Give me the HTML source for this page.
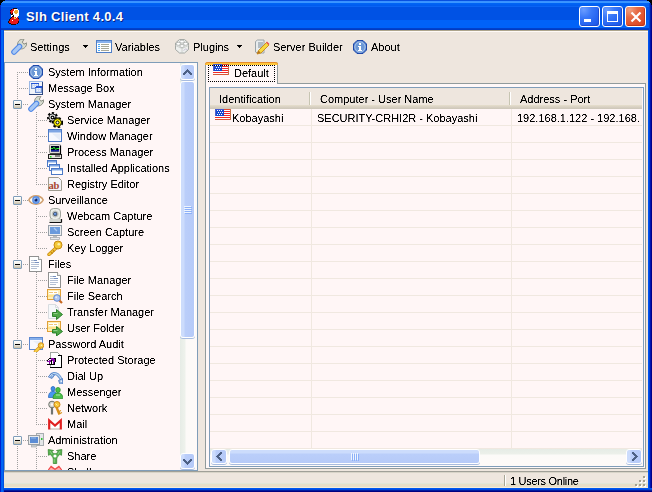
<!DOCTYPE html>
<html><head><meta charset="utf-8">
<style>
*{margin:0;padding:0;box-sizing:border-box}
html,body{width:652px;height:492px;overflow:hidden;background:#0054E3}
body{font-family:"Liberation Sans",sans-serif;font-size:11px;color:#000;position:relative}
.a{position:absolute}
svg{display:block}
#title{left:0;top:0;width:652px;height:30px;
 background:linear-gradient(#0850E0 0px,#0850E0 1px,#3890FF 1px,#3C98FF 3px,#0066F6 3px,#005AEE 6px,#0A64F4 6px,#0A64F4 7px,#0052E4 7px,#0052E4 20px,#0062F8 20px,#0062F8 28px,#0044D0 28px,#0038C0 30px)}
#lb{left:0;top:30px;width:4px;height:462px;background:linear-gradient(90deg,#0020D0 0,#0020D0 1px,#0060F0 1px,#0068F8 3px,#0050E0 3px)}
#rb{left:648px;top:30px;width:4px;height:462px;background:linear-gradient(90deg,#0054F0 0,#0054F0 1px,#0040D8 1px,#0040D8 2px,#0014B0 2px,#0014B0 3px,#000088 3px)}
#bb{left:4px;top:488px;width:648px;height:4px;background:linear-gradient(#0058F0 0,#0058F0 1px,#0048E0 1px,#0048E0 2px,#001CA0 2px,#001CA0 3px,#000080 3px)}
#ttext{left:26px;top:9px;color:#fff;font-weight:bold;font-size:13px;text-shadow:1px 1px #0A1E80;letter-spacing:0.3px}
#frame{left:4px;top:30px;width:644px;height:458px;background:#EEE6DE}
.tbt{position:absolute;top:42px;line-height:1;filter:url(#crisp)}
.tl{position:absolute;white-space:nowrap;line-height:12px;filter:url(#crisp)}
.ic{position:absolute;width:16px;height:16px}
#tree{left:4px;top:62px;width:194px;height:409px;border:1px solid #7F9DB9;background:#FFF6F6;overflow:hidden}
.hd{position:absolute;height:1px;background:repeating-linear-gradient(90deg,#A0A0A0 0 1px,transparent 1px 2px)}
.vd{position:absolute;width:1px;background:repeating-linear-gradient(#A0A0A0 0 1px,transparent 1px 2px)}
.ex{position:absolute;width:9px;height:9px;border:1px solid #7F9DB9;border-radius:1px;background:linear-gradient(#FFFFFF,#F0EEE6 50%,#C7BDA7)}
.ex:after{content:"";position:absolute;left:1px;top:3px;width:5px;height:1px;background:#000}
.sbv{position:absolute;left:180px;top:63px;width:17px;height:406px;background:linear-gradient(90deg,#E6ECE6,#EEF2EC 5px,#FCFAF8 6px,#FEFAF8)}
.sb{position:absolute;border:1px solid #FFFFFF;border-radius:3px;background:linear-gradient(135deg,#C8D8FC,#BCCEFA 50%,#B6CCFC);box-shadow:0 1px #A8BCE0}
.sbtn{position:absolute;border:1px solid #fff;border-radius:2px;background:linear-gradient(135deg,#C8D6FB,#B4C8F6 60%,#AAC0F2)}
.sbtn>div{position:absolute;left:0;top:0;right:0;bottom:0;border-radius:2px;box-shadow:inset -1px -1px #8FA8DC}
#tab{left:205px;top:62px;width:73px;height:22px;background:#FFF8F8;border:1px solid #919B9C;border-bottom:none;border-radius:3px 3px 0 0}
#tabtop{left:205px;top:62px;width:73px;height:3px;background:#FFC83C;border-radius:3px 3px 0 0;box-shadow:inset 0 1px #E68B2C}
#page{left:205px;top:83px;width:441px;height:386px;border:1px solid #919B9C;background:#FFF8F8}
#list{left:209px;top:87px;width:435px;height:380px;border:1px solid #7F9DB9;background:#FFF6F6;overflow:hidden}
#hdr{left:210px;top:88px;width:432px;height:21px;background:linear-gradient(#EEE6DE,#EEE6DE 17px,#E6DFCC 17px,#D8D0C2 19px,#CCC6B8 21px)}
.hsep{position:absolute;top:92px;width:2px;height:13px;background:linear-gradient(90deg,#C7C5B2 1px,#fff 1px)}
#status{left:4px;top:471px;width:644px;height:17px;background:linear-gradient(#A0A098 0,#A0A098 1px,#D8D4C8 1px,#D8D4C8 2px,#EEE6DE 2px,#EEE6DE 12px,#E2E6D8 12px,#E2E6D8 13px,#E8DEC8 13px,#E8DEC8 16px,#F6ECD8 16px)}
.tbtn{width:21px;height:21px;border:1px solid #fff;border-radius:3px;background:radial-gradient(circle at 20% 15%,#6A9CFF 0,#3A78F8 35%,#2563F0 70%,#1B52E0 100%);box-shadow:inset -1px -1px #1E4CD0}
.cls{background:radial-gradient(circle at 20% 15%,#F0A080 0,#E66A44 35%,#E0502A 70%,#D04020 100%);box-shadow:inset -1px -1px #C03818}
</style></head><body>
<svg width="0" height="0" style="position:absolute"><filter id="crisp" color-interpolation-filters="sRGB"><feComponentTransfer><feFuncA type="linear" slope="2.2" intercept="-0.5"/></feComponentTransfer></filter></svg>
<div id="frame" class="a"></div>
<div id="title" class="a"></div>
<div class="a" style="left:4px;top:30px;width:644px;height:2px;background:linear-gradient(#ACA48C 0,#ACA48C 1px,#FFFAF6 1px)"></div>
<div id="lb" class="a"></div><div id="rb" class="a"></div><div id="bb" class="a"></div>
<div class="a" style="left:0;top:3px;width:1px;height:27px;background:#0028C8"></div>
<div class="a" style="left:649px;top:3px;width:3px;height:27px;background:linear-gradient(90deg,#0044D8 0,#0044D8 1px,#0020A8 1px,#0020A8 2px,#000890 2px)"></div>
<div id="ttext" class="a">Slh Client 4.0.4</div>

<div class="a tbtn" style="left:579px;top:6px"><div class="a" style="left:4px;top:12px;width:7px;height:3px;background:#fff"></div></div>
<div class="a tbtn" style="left:602px;top:6px"><div class="a" style="left:4px;top:4px;width:11px;height:11px;border:1px solid #fff;border-top-width:3px"></div></div>
<div class="a tbtn cls" style="left:625px;top:6px"><svg class="a" style="left:4px;top:4px" width="12" height="12"><path d="M1.5 1.5l9 9M10.5 1.5l-9 9" stroke="#fff" stroke-width="2.2"/></svg></div>
<div class="a" style="left:8px;top:8px"><svg width="12" height="17" viewBox="0 0 12 17" shape-rendering="crispEdges"><path d="M5 0h1v1h-1zM6 0h1v1h-1zM7 0h1v1h-1zM8 0h1v1h-1zM3 1h1v1h-1zM2 2h1v1h-1zM2 4h1v1h-1zM2 5h1v1h-1zM4 5h1v1h-1zM3 6h1v1h-1zM4 6h1v1h-1zM5 7h1v1h-1zM4 8h1v1h-1zM5 8h1v1h-1zM3 9h1v1h-1zM2 10h1v1h-1zM10 10h1v1h-1zM1 11h1v1h-1zM1 12h1v1h-1zM0 13h1v1h-1zM10 13h1v1h-1zM0 14h1v1h-1zM10 14h1v1h-1zM1 15h1v1h-1zM2 15h1v1h-1zM9 15h1v1h-1zM3 16h1v1h-1zM4 16h1v1h-1zM5 16h1v1h-1zM6 16h1v1h-1zM7 16h1v1h-1z" fill="#200808"/><path d="M4 1h1v1h-1zM5 1h1v1h-1zM3 2h1v1h-1zM4 2h1v1h-1zM5 2h1v1h-1zM2 3h1v1h-1zM3 3h1v1h-1zM4 3h1v1h-1zM3 4h1v1h-1zM4 4h1v1h-1zM3 5h1v1h-1zM4 9h1v1h-1zM5 9h1v1h-1zM7 9h1v1h-1zM9 9h1v1h-1zM3 10h1v1h-1zM4 10h1v1h-1zM5 10h1v1h-1zM8 10h1v1h-1zM9 10h1v1h-1zM2 11h1v1h-1zM3 11h1v1h-1zM4 11h1v1h-1zM5 11h1v1h-1zM6 11h1v1h-1zM7 11h1v1h-1zM8 11h1v1h-1zM9 11h1v1h-1zM10 11h1v1h-1zM2 12h1v1h-1zM3 12h1v1h-1zM5 12h1v1h-1zM6 12h1v1h-1zM7 12h1v1h-1zM8 12h1v1h-1zM9 12h1v1h-1zM10 12h1v1h-1zM1 13h1v1h-1zM2 13h1v1h-1zM3 13h1v1h-1zM4 13h1v1h-1zM5 13h1v1h-1zM6 13h1v1h-1zM7 13h1v1h-1zM8 13h1v1h-1zM9 13h1v1h-1zM1 14h1v1h-1zM2 14h1v1h-1zM3 14h1v1h-1zM4 14h1v1h-1zM5 14h1v1h-1zM6 14h1v1h-1zM7 14h1v1h-1zM8 14h1v1h-1zM9 14h1v1h-1zM3 15h1v1h-1zM4 15h1v1h-1zM5 15h1v1h-1zM6 15h1v1h-1zM7 15h1v1h-1zM8 15h1v1h-1z" fill="#E81818"/><path d="M6 1h1v1h-1zM7 1h1v1h-1zM8 1h1v1h-1zM9 1h1v1h-1zM6 2h1v1h-1zM10 2h1v1h-1zM5 3h1v1h-1zM10 3h1v1h-1zM5 4h1v1h-1zM10 4h1v1h-1zM5 5h1v1h-1zM6 5h1v1h-1zM9 5h1v1h-1zM10 5h1v1h-1zM5 6h1v1h-1zM6 6h1v1h-1zM7 6h1v1h-1zM8 6h1v1h-1zM9 6h1v1h-1zM10 6h1v1h-1zM3 7h1v1h-1zM4 7h1v1h-1zM6 7h1v1h-1zM7 7h1v1h-1zM8 7h1v1h-1zM9 7h1v1h-1zM10 7h1v1h-1zM3 8h1v1h-1zM6 8h1v1h-1zM7 8h1v1h-1zM8 8h1v1h-1zM9 8h1v1h-1zM8 9h1v1h-1zM4 12h1v1h-1z" fill="#FFFFFF"/><path d="M7 2h1v1h-1zM8 2h1v1h-1zM9 2h1v1h-1zM6 3h1v1h-1zM7 3h1v1h-1zM8 3h1v1h-1zM9 3h1v1h-1zM6 4h1v1h-1zM7 4h1v1h-1zM8 4h1v1h-1zM9 4h1v1h-1zM7 5h1v1h-1zM8 5h1v1h-1z" fill="#F0A838"/><path d="M6 9h1v1h-1zM6 10h1v1h-1zM7 10h1v1h-1z" fill="#F0D040"/></svg></div>

<svg class="a" style="left:0;top:0" width="5" height="5" shape-rendering="crispEdges"><path d="M0 0h5v1H3v1H2v1H1v2H0z" fill="#000"/></svg>
<svg class="a" style="left:647px;top:0" width="5" height="5" shape-rendering="crispEdges"><path d="M0 0h5v5H4V3H3V2H2V1H0z" fill="#000"/></svg>
<!-- toolbar -->
<div class="ic" style="left:11px;top:39px"><svg width="16" height="16" viewBox="0 0 16 16"><path d="M7.5 9.5L11 5.5" stroke="#888C80" stroke-width="4"/>
<path d="M7.6 9.2C5.8 7 6.3 2.8 8.8 1C10.1 0.2 11.6 0 13 0.3L11.3 3.1L12.9 5.2L15.8 3.9C15.8 7 13.4 9.9 10.4 9.9z" fill="#D8DCD0" stroke="#80847A" stroke-width="0.9"/>
<path d="M3 13L8.5 7.5" stroke="#5088E8" stroke-width="5.6" stroke-linecap="round"/>
<path d="M3 13L8.5 7.5" stroke="#A8C8F4" stroke-width="3.4" stroke-linecap="round"/></svg></div>
<div class="tbt" style="left:30px">Settings</div>
<svg class="a" style="left:83px;top:45px" width="5" height="3"><path d="M0 0h5v1h-1v1h-1v1h-1v-1h-1v-1h-1z" fill="#000"/></svg>
<div class="ic" style="left:96px;top:39px"><svg width="16" height="16" viewBox="0 0 16 16"><g shape-rendering="crispEdges"><rect x="0" y="1" width="16" height="13" fill="#4F7FC8"/><rect x="1" y="2" width="14" height="2" fill="#88B0EC"/><rect x="1" y="4" width="14" height="9" fill="#FFFFFF"/>
<path d="M2 5h2v1H2zM2 7h2v1H2zM2 9h2v1H2zM2 11h2v1H2z" fill="#48A8F8"/><path d="M5 5h8v1H5zM5 7h8v1H5zM5 9h8v1H5zM5 11h8v1H5z" fill="#A8A898"/></g></svg></div>
<div class="tbt" style="left:115px">Variables</div>
<div class="ic" style="left:174px;top:38px"><svg width="16" height="16" viewBox="0 0 16 16"><path d="M1.5 5L5.5 1.5h5L14.5 5v6.5L10.5 15h-5L1.5 11.5z" fill="#EEF0EE" stroke="#A4A8A4"/>
<path d="M1.5 7.5L8 10.5 14.5 7.5M8 10.5V15" stroke="#C4C8C4" fill="none" stroke-width="0.8"/>
<ellipse cx="8" cy="3.6" rx="2.2" ry="1.5" fill="#FFFFFF" stroke="#A8ACA8" stroke-width="0.8"/><ellipse cx="4.4" cy="5.8" rx="2.2" ry="1.5" fill="#FFFFFF" stroke="#A8ACA8" stroke-width="0.8"/><ellipse cx="11.6" cy="5.8" rx="2.2" ry="1.5" fill="#FFFFFF" stroke="#A8ACA8" stroke-width="0.8"/><ellipse cx="8" cy="8" rx="2.2" ry="1.5" fill="#FFFFFF" stroke="#A8ACA8" stroke-width="0.8"/>
<path d="M9.5 12.5l2-1.5 2 0.5" stroke="#C0B8D0" fill="none" stroke-width="0.8"/></svg></div>
<div class="tbt" style="left:193px">Plugins</div>
<svg class="a" style="left:237px;top:45px" width="5" height="3"><path d="M0 0h5v1h-1v1h-1v1h-1v-1h-1v-1h-1z" fill="#000"/></svg>
<div class="ic" style="left:254px;top:39px"><svg width="16" height="16" viewBox="0 0 16 16"><path d="M1.5 2.5l2-1.5h6.5v13H3.5l-2-1z" fill="#E8ECEE" stroke="#9CA4A8"/><path d="M4 4h5M4 6h5M4 8h4" stroke="#7C8C98"/>
<path d="M3 15l1.5-3.5 8-8 2.5 2.5-8 8z" fill="#F6D840" stroke="#C88818" stroke-width="0.9"/><path d="M3 15l1.5-3.5 2 2z" fill="#B07020"/><path d="M12 3.5l2.5 2.5 1-1-2.5-2.5z" fill="#E85050"/></svg></div>
<div class="tbt" style="left:273px">Server Builder</div>
<div class="ic" style="left:352px;top:39px"><svg width="16" height="16" viewBox="0 0 16 16"><path d="M5 1.5h6L14.5 5v6L11 14.5H5L1.5 11V5z" fill="#4C7CCC" stroke="#1E48A8"/>
<circle cx="8" cy="8" r="5.3" fill="#78A2DC" stroke="#C8DAF2" stroke-width="0.7"/><circle cx="8" cy="8" r="4.2" fill="#6C98D6"/>
<g shape-rendering="crispEdges"><rect x="7" y="4" width="2" height="2" fill="#fff"/><path d="M6 7h3v4h1v1H6v-1h1V8H6z" fill="#fff"/></g></svg></div>
<div class="tbt" style="left:371px">About</div>
<!-- tree -->
<div id="tree" class="a"></div>
<div class="a" style="left:0;top:0;width:197px;height:470px;overflow:hidden">
<div class="vd" style="left:17px;top:72px;height:398px"></div>
<div class="hd" style="left:17px;top:72px;width:11px"></div>
<div class="hd" style="left:17px;top:88px;width:11px"></div>
<div class="hd" style="left:17px;top:104px;width:11px"></div>
<div class="hd" style="left:36px;top:120px;width:11px"></div>
<div class="hd" style="left:36px;top:136px;width:11px"></div>
<div class="hd" style="left:36px;top:152px;width:11px"></div>
<div class="hd" style="left:36px;top:168px;width:11px"></div>
<div class="hd" style="left:36px;top:184px;width:11px"></div>
<div class="hd" style="left:17px;top:200px;width:11px"></div>
<div class="hd" style="left:36px;top:216px;width:11px"></div>
<div class="hd" style="left:36px;top:232px;width:11px"></div>
<div class="hd" style="left:36px;top:248px;width:11px"></div>
<div class="hd" style="left:17px;top:264px;width:11px"></div>
<div class="hd" style="left:36px;top:280px;width:11px"></div>
<div class="hd" style="left:36px;top:296px;width:11px"></div>
<div class="hd" style="left:36px;top:312px;width:11px"></div>
<div class="hd" style="left:36px;top:328px;width:11px"></div>
<div class="hd" style="left:17px;top:344px;width:11px"></div>
<div class="hd" style="left:36px;top:360px;width:11px"></div>
<div class="hd" style="left:36px;top:376px;width:11px"></div>
<div class="hd" style="left:36px;top:392px;width:11px"></div>
<div class="hd" style="left:36px;top:408px;width:11px"></div>
<div class="hd" style="left:36px;top:424px;width:11px"></div>
<div class="hd" style="left:17px;top:440px;width:11px"></div>
<div class="hd" style="left:36px;top:456px;width:11px"></div>
<div class="hd" style="left:36px;top:472px;width:11px"></div>
<div class="vd" style="left:36px;top:112px;height:73px"></div>
<div class="vd" style="left:36px;top:208px;height:41px"></div>
<div class="vd" style="left:36px;top:272px;height:57px"></div>
<div class="vd" style="left:36px;top:352px;height:73px"></div>
<div class="vd" style="left:36px;top:448px;height:23px"></div>
<div class="ex" style="left:13px;top:100px"></div>
<div class="ex" style="left:13px;top:196px"></div>
<div class="ex" style="left:13px;top:260px"></div>
<div class="ex" style="left:13px;top:340px"></div>
<div class="ex" style="left:13px;top:436px"></div>
<div class="ic" style="left:28px;top:64px"><svg width="16" height="16" viewBox="0 0 16 16"><path d="M5 1.5h6L14.5 5v6L11 14.5H5L1.5 11V5z" fill="#4C7CCC" stroke="#1E48A8"/>
<circle cx="8" cy="8" r="5.3" fill="#78A2DC" stroke="#C8DAF2" stroke-width="0.7"/><circle cx="8" cy="8" r="4.2" fill="#6C98D6"/>
<g shape-rendering="crispEdges"><rect x="7" y="4" width="2" height="2" fill="#fff"/><path d="M6 7h3v4h1v1H6v-1h1V8H6z" fill="#fff"/></g></svg></div>
<div class="tl" style="left:48px;top:66px">System Information</div>
<div class="ic" style="left:28px;top:80px"><svg width="16" height="16" viewBox="0 0 16 16" shape-rendering="crispEdges"><path d="M1 1h1v1h-1zM2 1h1v1h-1zM3 1h1v1h-1zM4 1h1v1h-1zM5 1h1v1h-1zM6 1h1v1h-1zM7 1h1v1h-1zM8 1h1v1h-1zM9 1h1v1h-1zM10 1h1v1h-1zM11 1h1v1h-1zM12 1h1v1h-1zM13 1h1v1h-1zM14 1h1v1h-1zM1 2h1v1h-1zM1 3h1v1h-1zM1 4h1v1h-1zM1 5h1v1h-1zM1 6h1v1h-1zM1 7h1v1h-1zM1 8h1v1h-1zM1 9h1v1h-1zM1 10h1v1h-1zM1 11h1v1h-1zM1 12h1v1h-1zM1 13h1v1h-1z" fill="#9CB8E4"/><path d="M2 2h1v1h-1zM3 2h1v1h-1zM4 2h1v1h-1zM5 2h1v1h-1zM6 2h1v1h-1zM7 2h1v1h-1zM8 2h1v1h-1zM9 2h1v1h-1zM10 2h1v1h-1zM11 2h1v1h-1zM12 2h1v1h-1zM13 2h1v1h-1zM2 3h1v1h-1zM11 3h1v1h-1zM12 3h1v1h-1zM13 3h1v1h-1zM2 4h1v1h-1zM5 4h1v1h-1zM7 4h1v1h-1zM9 4h1v1h-1zM11 4h1v1h-1zM12 4h1v1h-1zM13 4h1v1h-1zM2 5h1v1h-1zM11 5h1v1h-1zM12 5h1v1h-1zM13 5h1v1h-1zM2 6h1v1h-1zM5 6h1v1h-1zM7 6h1v1h-1zM2 7h1v1h-1zM2 8h1v1h-1zM9 8h1v1h-1zM11 8h1v1h-1zM2 9h1v1h-1zM3 9h1v1h-1zM4 9h1v1h-1zM5 9h1v1h-1zM6 9h1v1h-1zM2 10h1v1h-1zM3 10h1v1h-1zM4 10h1v1h-1zM5 10h1v1h-1zM6 10h1v1h-1zM9 10h1v1h-1zM11 10h1v1h-1zM2 11h1v1h-1zM3 11h1v1h-1zM4 11h1v1h-1zM5 11h1v1h-1zM6 11h1v1h-1zM2 12h1v1h-1zM3 12h1v1h-1zM4 12h1v1h-1zM5 12h1v1h-1zM6 12h1v1h-1zM2 13h1v1h-1zM3 13h1v1h-1zM4 13h1v1h-1zM5 13h1v1h-1zM6 13h1v1h-1zM7 13h1v1h-1zM8 13h1v1h-1zM9 13h1v1h-1zM10 13h1v1h-1zM11 13h1v1h-1zM12 13h1v1h-1zM13 13h1v1h-1z" fill="#F2F4FA"/><path d="M14 2h1v1h-1zM14 3h1v1h-1zM14 4h1v1h-1zM14 5h1v1h-1zM14 6h1v1h-1zM14 7h1v1h-1zM14 8h1v1h-1zM14 9h1v1h-1zM14 10h1v1h-1zM14 11h1v1h-1zM14 12h1v1h-1zM14 13h1v1h-1zM1 14h1v1h-1zM2 14h1v1h-1zM3 14h1v1h-1zM4 14h1v1h-1zM5 14h1v1h-1zM6 14h1v1h-1zM7 14h1v1h-1zM8 14h1v1h-1zM9 14h1v1h-1zM10 14h1v1h-1zM11 14h1v1h-1zM12 14h1v1h-1zM13 14h1v1h-1zM14 14h1v1h-1z" fill="#304880"/><path d="M3 3h1v1h-1zM4 3h1v1h-1zM5 3h1v1h-1zM6 3h1v1h-1zM7 3h1v1h-1zM8 3h1v1h-1zM9 3h1v1h-1zM10 3h1v1h-1zM8 6h1v1h-1zM9 6h1v1h-1zM10 6h1v1h-1zM11 6h1v1h-1zM12 6h1v1h-1zM13 6h1v1h-1zM7 7h1v1h-1zM8 7h1v1h-1zM9 7h1v1h-1zM10 7h1v1h-1zM11 7h1v1h-1zM12 7h1v1h-1zM13 7h1v1h-1z" fill="#2254D8"/><path d="M3 4h1v1h-1zM10 4h1v1h-1zM3 5h1v1h-1zM10 5h1v1h-1zM3 6h1v1h-1zM3 7h1v1h-1zM3 8h1v1h-1zM4 8h1v1h-1zM5 8h1v1h-1zM6 8h1v1h-1zM7 8h1v1h-1zM13 8h1v1h-1zM7 9h1v1h-1zM13 9h1v1h-1zM7 10h1v1h-1zM13 10h1v1h-1zM7 11h1v1h-1zM13 11h1v1h-1zM7 12h1v1h-1zM8 12h1v1h-1zM9 12h1v1h-1zM10 12h1v1h-1zM11 12h1v1h-1zM12 12h1v1h-1zM13 12h1v1h-1z" fill="#7090D0"/><path d="M4 4h1v1h-1zM6 4h1v1h-1zM8 4h1v1h-1zM4 5h1v1h-1zM5 5h1v1h-1zM6 5h1v1h-1zM7 5h1v1h-1zM8 5h1v1h-1zM9 5h1v1h-1zM4 6h1v1h-1zM6 6h1v1h-1zM4 7h1v1h-1zM5 7h1v1h-1zM6 7h1v1h-1zM8 8h1v1h-1zM10 8h1v1h-1zM12 8h1v1h-1zM8 9h1v1h-1zM9 9h1v1h-1zM10 9h1v1h-1zM11 9h1v1h-1zM12 9h1v1h-1zM8 10h1v1h-1zM10 10h1v1h-1zM12 10h1v1h-1zM8 11h1v1h-1zM9 11h1v1h-1zM10 11h1v1h-1zM11 11h1v1h-1zM12 11h1v1h-1z" fill="#CCDAF6"/></svg></div>
<div class="tl" style="left:48px;top:82px">Message Box</div>
<div class="ic" style="left:28px;top:96px"><svg width="16" height="16" viewBox="0 0 16 16"><path d="M7.5 9.5L11 5.5" stroke="#888C80" stroke-width="4"/>
<path d="M7.6 9.2C5.8 7 6.3 2.8 8.8 1C10.1 0.2 11.6 0 13 0.3L11.3 3.1L12.9 5.2L15.8 3.9C15.8 7 13.4 9.9 10.4 9.9z" fill="#D8DCD0" stroke="#80847A" stroke-width="0.9"/>
<path d="M3 13L8.5 7.5" stroke="#5088E8" stroke-width="5.6" stroke-linecap="round"/>
<path d="M3 13L8.5 7.5" stroke="#A8C8F4" stroke-width="3.4" stroke-linecap="round"/></svg></div>
<div class="tl" style="left:48px;top:98px">System Manager</div>
<div class="ic" style="left:47px;top:112px"><svg width="16" height="16" viewBox="0 0 16 16"><circle cx="5.5" cy="5.5" r="4.5" fill="none" stroke="#000" stroke-width="2" stroke-dasharray="2.2 1.8"/>
<circle cx="5.5" cy="5.5" r="3.6" fill="#EEEEEE" stroke="#202020" stroke-width="1"/><circle cx="5.5" cy="5.5" r="1.4" fill="#fff" stroke="#000" stroke-width="1.2"/>
<circle cx="10.5" cy="10.5" r="4.6" fill="none" stroke="#000" stroke-width="2.2" stroke-dasharray="2.4 2"/>
<circle cx="10.5" cy="10.5" r="3.9" fill="#FFF400" stroke="#101000" stroke-width="0.9"/><circle cx="10.5" cy="10.5" r="1.5" fill="#FFFFF0" stroke="#000" stroke-width="1"/></svg></div>
<div class="tl" style="left:67px;top:114px">Service Manager</div>
<div class="ic" style="left:47px;top:128px"><svg width="16" height="16" viewBox="0 0 16 16"><rect x="1.5" y="1.5" width="13" height="12" fill="#F7F8FE" stroke="#4C79C6"/>
<rect x="2" y="2" width="12" height="2.5" fill="#7FA6E4"/><path d="M5 5.5h8v7z" fill="#E6ECF8"/></svg></div>
<div class="tl" style="left:67px;top:130px">Window Manager</div>
<div class="ic" style="left:47px;top:144px"><svg width="16" height="16" viewBox="0 0 16 16"><rect x="2.5" y="0.5" width="11" height="9" rx="1" fill="#E0DCD4" stroke="#909090"/><path d="M13.5 1.5v8.5H3" stroke="#000" stroke-width="1.2" fill="none"/>
<rect x="4" y="2" width="8" height="5.5" fill="#000020"/><rect x="4" y="6" width="8" height="1.5" fill="#1020A0"/><path d="M4 4.5h2l1-1.5 1.5 2.5 1.5-1h2" stroke="#20F020" stroke-width="1" fill="none"/>
<rect x="1.5" y="10.5" width="13" height="4" fill="#E8E6E0" stroke="#202020"/><rect x="3" y="12" width="1.5" height="1.5" fill="#10E010"/><rect x="8" y="11.5" width="5" height="1" fill="#202020"/></svg></div>
<div class="tl" style="left:67px;top:146px">Process Manager</div>
<div class="ic" style="left:47px;top:160px"><svg width="16" height="16" viewBox="0 0 16 16"><rect x="0.5" y="0.5" width="9" height="6" fill="#fff" stroke="#4C79C6"/><rect x="1" y="1" width="8" height="1.5" fill="#7FA6E4"/>
<rect x="2.5" y="4.5" width="10" height="6" fill="#fff" stroke="#4C79C6"/><rect x="3" y="5" width="9" height="1.5" fill="#7FA6E4"/>
<rect x="4.5" y="8.5" width="11" height="6" fill="#fff" stroke="#4C79C6"/><rect x="5" y="9" width="10" height="1.5" fill="#7FA6E4"/></svg></div>
<div class="tl" style="left:67px;top:162px">Installed Applications</div>
<div class="ic" style="left:47px;top:176px"><svg width="16" height="16" viewBox="0 0 16 16"><path d="M1.5 1.5h10l3 3v10h-13z" fill="#F4F4F8" stroke="#A09C90"/>
<text x="1.5" y="12.5" font-family="Liberation Serif" font-weight="bold" font-size="10.5" fill="#A84430" letter-spacing="-0.3">ab</text></svg></div>
<div class="tl" style="left:67px;top:178px">Registry Editor</div>
<div class="ic" style="left:28px;top:192px"><svg width="16" height="16" viewBox="0 0 16 16"><path d="M0.8 8C3.5 2.5 12.5 2.5 15.2 8C12.5 13.5 3.5 13.5 0.8 8z" fill="#FFFCF4" stroke="#D0A070" stroke-width="1.6"/>
<circle cx="8" cy="8" r="3.9" fill="#5C90E4"/><circle cx="8" cy="8" r="2.6" fill="#78A8F0"/><circle cx="8" cy="8" r="1.5" fill="#102060"/><circle cx="7" cy="6.8" r="0.6" fill="#fff"/></svg></div>
<div class="tl" style="left:48px;top:194px">Surveillance</div>
<div class="ic" style="left:47px;top:208px"><svg width="16" height="16" viewBox="0 0 16 16"><rect x="3" y="0.5" width="10.5" height="11" rx="3.5" fill="#ECEEEA" stroke="#A0A49C"/>
<circle cx="8.2" cy="6" r="3" fill="#FFFFFF" stroke="#B0B4AC" stroke-width="0.8"/><circle cx="8.2" cy="6" r="1.9" fill="#4A78C0" stroke="#404850" stroke-width="0.8"/><circle cx="8" cy="5.8" r="0.8" fill="#88B0F0"/>
<path d="M2.5 11h11.5v3.5H2.5z" fill="#D4D6D0"/><path d="M2.5 14.5h12M14.5 11v3.5" stroke="#101010" stroke-width="1.2"/></svg></div>
<div class="tl" style="left:67px;top:210px">Webcam Capture</div>
<div class="ic" style="left:47px;top:224px"><svg width="16" height="16" viewBox="0 0 16 16"><rect x="1.5" y="1.5" width="13" height="10" fill="#ECEEF0" stroke="#98A0A8"/>
<rect x="3" y="3" width="10" height="7" fill="#6A9ADC"/><path d="M7 4l3 3" stroke="#A8C8F0" stroke-width="1.2"/><rect x="6" y="12" width="4" height="1.5" fill="#B8BCC0"/><rect x="3.5" y="13.5" width="9" height="2" fill="#E8EAEC" stroke="#A0A4A8" stroke-width="0.7"/></svg></div>
<div class="tl" style="left:67px;top:226px">Screen Capture</div>
<div class="ic" style="left:47px;top:240px"><svg width="16" height="16" viewBox="0 0 16 16"><path d="M9 8L2 14.5" stroke="#C88A10" stroke-width="3.4" stroke-linecap="round"/><path d="M9 8L2 14.5" stroke="#F4C840" stroke-width="1.8" stroke-linecap="round"/>
<path d="M4 12l1.5 1.8M6 10.2l1.3 1.6" stroke="#C88A10" stroke-width="1.6"/>
<circle cx="11" cy="5" r="4" fill="#F4C838" stroke="#C88A10" stroke-width="1"/><circle cx="11.8" cy="4.2" r="1.3" fill="#FFF0A8"/></svg></div>
<div class="tl" style="left:67px;top:242px">Key Logger</div>
<div class="ic" style="left:28px;top:256px"><svg width="16" height="16" viewBox="0 0 16 16"><g shape-rendering="crispEdges"><path d="M1.5 0.5h9l3 3v12h-12z" fill="#FFFFFF" stroke="#909090"/><path d="M10.5 0.5v3h3" fill="#E8E8E8" stroke="#A0A0A0"/>
<path d="M3 4h6v1H3zM3 6h8v1H3zM3 8h8v1H3zM3 10h8v1H3zM3 12h6v1H3z" fill="#B4C0D4"/><path d="M6 4h3v1H6zM7 6h4v1H7z" fill="#7890C0"/></g></svg></div>
<div class="tl" style="left:48px;top:258px">Files</div>
<div class="ic" style="left:47px;top:272px"><svg width="16" height="16" viewBox="0 0 16 16"><g shape-rendering="crispEdges"><path d="M1.5 0.5h9l3 3v12h-12z" fill="#FFFFFF" stroke="#909090"/><path d="M10.5 0.5v3h3" fill="#E8E8E8" stroke="#A0A0A0"/>
<path d="M3 4h6v1H3zM3 6h8v1H3zM3 8h8v1H3zM3 10h8v1H3zM3 12h6v1H3z" fill="#B4C0D4"/><path d="M6 4h3v1H6zM7 6h4v1H7z" fill="#7890C0"/></g></svg></div>
<div class="tl" style="left:67px;top:274px">File Manager</div>
<div class="ic" style="left:47px;top:288px"><svg width="16" height="16" viewBox="0 0 16 16"><rect x="0.5" y="1.5" width="13" height="10" fill="#FFF0B8" stroke="#E0A038"/><rect x="2" y="3" width="9" height="3" fill="#FFFFFF"/><path d="M2 4.5h4M7 4.5h3" stroke="#F0C878"/><path d="M1 8h12" stroke="#FFE490" stroke-width="2"/>
<path d="M12 12l3 3" stroke="#C86820" stroke-width="2.2"/><circle cx="10" cy="10" r="3.3" fill="#B0C8F0" stroke="#6088D0" stroke-width="1"/><circle cx="9.2" cy="9.2" r="1" fill="#E0ECFC"/></svg></div>
<div class="tl" style="left:67px;top:290px">File Search</div>
<div class="ic" style="left:47px;top:304px"><svg width="16" height="16" viewBox="0 0 16 16"><path d="M1.5 0.5h7l3 3v11h-10z" fill="#F6F8FA" stroke="#D8DCE0"/><path d="M8.5 0.5v3h3" fill="none" stroke="#D8DCE0"/>
<path d="M5.5 8.5h4V5.5L15.5 10.5 9.5 15.5V12.5h-4z" fill="#50A848" stroke="#207A20" stroke-width="0.9"/><path d="M6.5 9.5h4" stroke="#A0D898" stroke-width="0.8"/></svg></div>
<div class="tl" style="left:67px;top:306px">Transfer Manager</div>
<div class="ic" style="left:47px;top:320px"><svg width="16" height="16" viewBox="0 0 16 16"><rect x="0.5" y="1.5" width="13" height="10" fill="#FFF0B8" stroke="#E0A038"/><rect x="2" y="3" width="9" height="3" fill="#FFFFFF"/><path d="M2 4.5h4M7 4.5h3" stroke="#F0C878"/><path d="M1 8h12" stroke="#FFE490" stroke-width="2"/>
<path d="M5.5 9.5h4V6.5L15.5 11.5 9.5 16V13h-4z" fill="#50A848" stroke="#207A20" stroke-width="0.9"/><path d="M6.5 10.5h4" stroke="#A0D898" stroke-width="0.8"/></svg></div>
<div class="tl" style="left:67px;top:322px">User Folder</div>
<div class="ic" style="left:28px;top:336px"><svg width="16" height="16" viewBox="0 0 16 16"><rect x="1.5" y="1.5" width="13" height="12" fill="#F8F8FE" stroke="#5C88D0"/><rect x="2" y="2" width="12" height="2" fill="#88B0EC"/>
<path d="M5 5h8v6z" fill="#E8EEF8"/>
<path d="M7.5 15.5l5-5" stroke="#D89820" stroke-width="3.4" stroke-linecap="round"/><path d="M7.5 15.5l5-5" stroke="#F8D048" stroke-width="1.8" stroke-linecap="round"/>
<circle cx="13" cy="9.5" r="2.8" fill="#F4C840" stroke="#D08818" stroke-width="0.9"/><circle cx="13.4" cy="9.3" r="0.8" fill="#FFF4C0"/></svg></div>
<div class="tl" style="left:48px;top:338px">Password Audit</div>
<div class="ic" style="left:47px;top:352px"><svg width="16" height="16" viewBox="0 0 16 16" shape-rendering="crispEdges"><path d="M3 0h1v1h-1zM4 0h1v1h-1zM5 0h1v1h-1zM6 0h1v1h-1zM7 0h1v1h-1zM8 0h1v1h-1zM9 0h1v1h-1zM10 0h1v1h-1zM3 1h1v1h-1zM11 1h1v1h-1zM3 2h1v1h-1zM12 2h1v1h-1zM3 3h1v1h-1zM3 4h1v1h-1zM3 5h1v1h-1zM3 13h1v1h-1zM3 14h1v1h-1z" fill="#A0A4A0"/><path d="M4 1h1v1h-1zM5 1h1v1h-1zM6 1h1v1h-1zM7 1h1v1h-1zM8 1h1v1h-1zM9 1h1v1h-1zM10 1h1v1h-1zM4 2h1v1h-1zM5 2h1v1h-1zM6 2h1v1h-1zM7 2h1v1h-1zM8 2h1v1h-1zM9 2h1v1h-1zM10 2h1v1h-1zM11 2h1v1h-1zM4 3h1v1h-1zM5 3h1v1h-1zM6 3h1v1h-1zM7 3h1v1h-1zM8 3h1v1h-1zM9 3h1v1h-1zM10 3h1v1h-1zM4 4h1v1h-1zM5 4h1v1h-1zM6 4h1v1h-1zM7 4h1v1h-1zM8 4h1v1h-1zM9 4h1v1h-1zM10 4h1v1h-1zM11 4h1v1h-1zM12 4h1v1h-1zM13 4h1v1h-1zM4 5h1v1h-1zM5 5h1v1h-1zM6 5h1v1h-1zM7 5h1v1h-1zM8 5h1v1h-1zM9 5h1v1h-1zM10 5h1v1h-1zM11 5h1v1h-1zM12 5h1v1h-1zM13 5h1v1h-1zM9 6h1v1h-1zM10 6h1v1h-1zM11 6h1v1h-1zM12 6h1v1h-1zM13 6h1v1h-1zM2 7h1v1h-1zM3 7h1v1h-1zM9 7h1v1h-1zM10 7h1v1h-1zM11 7h1v1h-1zM12 7h1v1h-1zM13 7h1v1h-1zM1 8h1v1h-1zM9 8h1v1h-1zM10 8h1v1h-1zM11 8h1v1h-1zM12 8h1v1h-1zM13 8h1v1h-1zM5 9h1v1h-1zM9 9h1v1h-1zM10 9h1v1h-1zM11 9h1v1h-1zM12 9h1v1h-1zM13 9h1v1h-1zM0 10h1v1h-1zM1 10h1v1h-1zM3 10h1v1h-1zM5 10h1v1h-1zM8 10h1v1h-1zM9 10h1v1h-1zM10 10h1v1h-1zM11 10h1v1h-1zM12 10h1v1h-1zM13 10h1v1h-1zM0 11h1v1h-1zM1 11h1v1h-1zM3 11h1v1h-1zM5 11h1v1h-1zM8 11h1v1h-1zM9 11h1v1h-1zM10 11h1v1h-1zM11 11h1v1h-1zM12 11h1v1h-1zM13 11h1v1h-1zM8 12h1v1h-1zM9 12h1v1h-1zM10 12h1v1h-1zM11 12h1v1h-1zM12 12h1v1h-1zM13 12h1v1h-1zM4 13h1v1h-1zM5 13h1v1h-1zM6 13h1v1h-1zM7 13h1v1h-1zM8 13h1v1h-1zM9 13h1v1h-1zM10 13h1v1h-1zM11 13h1v1h-1zM12 13h1v1h-1zM13 13h1v1h-1zM4 14h1v1h-1zM5 14h1v1h-1zM6 14h1v1h-1zM7 14h1v1h-1zM8 14h1v1h-1zM9 14h1v1h-1zM10 14h1v1h-1zM11 14h1v1h-1zM12 14h1v1h-1zM13 14h1v1h-1z" fill="#FFFFFF"/><path d="M11 3h1v1h-1zM12 3h1v1h-1zM13 3h1v1h-1zM14 3h1v1h-1zM14 4h1v1h-1zM14 5h1v1h-1zM2 6h1v1h-1zM3 6h1v1h-1zM7 6h1v1h-1zM8 6h1v1h-1zM14 6h1v1h-1zM1 7h1v1h-1zM8 7h1v1h-1zM14 7h1v1h-1zM0 8h1v1h-1zM4 8h1v1h-1zM8 8h1v1h-1zM14 8h1v1h-1zM4 9h1v1h-1zM8 9h1v1h-1zM14 9h1v1h-1zM4 10h1v1h-1zM7 10h1v1h-1zM14 10h1v1h-1zM4 11h1v1h-1zM7 11h1v1h-1zM14 11h1v1h-1zM0 12h1v1h-1zM1 12h1v1h-1zM2 12h1v1h-1zM3 12h1v1h-1zM4 12h1v1h-1zM5 12h1v1h-1zM6 12h1v1h-1zM7 12h1v1h-1zM14 12h1v1h-1zM14 13h1v1h-1zM14 14h1v1h-1zM3 15h1v1h-1zM4 15h1v1h-1zM5 15h1v1h-1zM6 15h1v1h-1zM7 15h1v1h-1zM8 15h1v1h-1zM9 15h1v1h-1zM10 15h1v1h-1zM11 15h1v1h-1zM12 15h1v1h-1zM13 15h1v1h-1zM14 15h1v1h-1z" fill="#000000"/><path d="M4 6h1v1h-1zM5 6h1v1h-1zM6 6h1v1h-1zM4 7h1v1h-1zM5 7h1v1h-1zM6 7h1v1h-1zM7 7h1v1h-1zM2 8h1v1h-1zM3 8h1v1h-1zM5 8h1v1h-1zM6 8h1v1h-1zM7 8h1v1h-1zM0 9h1v1h-1zM1 9h1v1h-1zM2 9h1v1h-1zM3 9h1v1h-1zM6 9h1v1h-1zM7 9h1v1h-1zM2 10h1v1h-1zM6 10h1v1h-1zM2 11h1v1h-1zM6 11h1v1h-1z" fill="#8C0CA8"/></svg></div>
<div class="tl" style="left:67px;top:354px">Protected Storage</div>
<div class="ic" style="left:47px;top:368px"><svg width="16" height="16" viewBox="0 0 16 16"><path d="M3.5 8C5 5 8 5 10.5 6.5C13 8.5 14.5 11 15 14.5" fill="none" stroke="#6A96D4" stroke-width="3"/>
<path d="M3.5 8C5 5 8 5 10.5 6.5C13 8.5 14.5 11 15 14.5" fill="none" stroke="#C0D8F0" stroke-width="1.2"/>
<path d="M1.2 8.8L4.5 5.5L7.5 7.2L5 10.5z" fill="#8CB0E0" stroke="#4C78C0" stroke-width="0.8"/><path d="M2.5 8.5L4.5 6.5L6 7.5" stroke="#E0ECF8" stroke-width="0.8" fill="none"/>
<path d="M11.5 12.5L15.5 10.5L15.8 16L13 16.5z" fill="#8CB0E0" stroke="#4C78C0" stroke-width="0.8"/><circle cx="14.3" cy="13.2" r="0.9" fill="#E8F0FC"/></svg></div>
<div class="tl" style="left:67px;top:370px">Dial Up</div>
<div class="ic" style="left:47px;top:384px"><svg width="16" height="16" viewBox="0 0 16 16"><ellipse cx="6" cy="4.8" rx="2" ry="2.4" fill="#3C8CE8" stroke="#2060B8" stroke-width="0.7"/><path d="M1.5 13.5C1.5 9 3.5 7.5 6 7.5S10.5 9 10.5 13.5z" fill="#4898F0" stroke="#2060B8" stroke-width="0.7"/>
<ellipse cx="11" cy="6" rx="2.3" ry="2.6" fill="#48C048" stroke="#288A28" stroke-width="0.7"/><path d="M6 14.5C6 10.5 8 9 11 9S15.8 10.5 15.8 14.5z" fill="#4CC04C" stroke="#288A28" stroke-width="0.7"/><path d="M9 11h4" stroke="#C8F0C8" stroke-width="0.8"/></svg></div>
<div class="tl" style="left:67px;top:386px">Messenger</div>
<div class="ic" style="left:47px;top:400px"><svg width="16" height="16" viewBox="0 0 16 16"><path d="M5 7v7.5" stroke="#707470" stroke-width="2.2"/><circle cx="5" cy="4.5" r="3.3" fill="#D0D4D0" stroke="#70746C" stroke-width="1"/><circle cx="5" cy="4.5" r="1.2" fill="#FFF6F6"/>
<path d="M9 6l3.5 8.5" stroke="#D89018" stroke-width="2.4"/><path d="M12 11.5l2-1M13 13.5l2-1" stroke="#D89018" stroke-width="1.2"/>
<circle cx="10" cy="4.5" r="3" fill="#F8C838" stroke="#D08818" stroke-width="1"/><path d="M8.5 3.5l2 2" stroke="#FFF0A0" stroke-width="1"/></svg></div>
<div class="tl" style="left:67px;top:402px">Network</div>
<div class="ic" style="left:47px;top:416px"><svg width="16" height="16" viewBox="0 0 16 16"><path d="M2 5h12v8H2z" fill="#FFFFFF"/><path d="M3 13h10" stroke="#B8B0A8" stroke-width="1"/>
<path d="M2.2 13.5V4.5L8 9.5L13.8 4.5V13.5" fill="none" stroke="#E02020" stroke-width="2.2" stroke-linejoin="miter"/></svg></div>
<div class="tl" style="left:67px;top:418px">Mail</div>
<div class="ic" style="left:28px;top:432px"><svg width="16" height="16" viewBox="0 0 16 16"><rect x="8.5" y="1.5" width="7" height="12" fill="#E4E6E8" stroke="#A8ACB0"/><rect x="13" y="6" width="1.5" height="2" fill="#30C030"/>
<rect x="0.5" y="3.5" width="11" height="9" fill="#E8EAEC" stroke="#9CA0A4"/><rect x="2" y="5" width="8" height="6" fill="#5C8CD4"/><path d="M3 6h5" stroke="#90B8E8"/><rect x="3.5" y="13" width="5" height="2" fill="#D0D4D8" stroke="#A0A4A8" stroke-width="0.6"/></svg></div>
<div class="tl" style="left:48px;top:434px">Administration</div>
<div class="ic" style="left:47px;top:448px"><svg width="16" height="16" viewBox="0 0 16 16"><path d="M6.3 15.5V11C6.3 9.2 4.5 8 3.3 6.3L1.5 7.3L1.2 1.5L6.5 2.5L4.8 3.6C5.6 5 7 5.8 8 5.8S10.4 5 11.2 3.6L9.5 2.5L14.8 1.5L14.5 7.3L12.7 6.3C11.5 8 9.7 9.2 9.7 11V15.5z" fill="#58B050" stroke="#3A8A34" stroke-width="0.8"/>
<path d="M7.2 14.5V11M3 3l2 3M13 3l-2 3" stroke="#98D890" stroke-width="0.8"/><circle cx="8" cy="8" r="1.6" fill="#FFFFFF"/></svg></div>
<div class="tl" style="left:67px;top:450px">Share</div>
<div class="ic" style="left:47px;top:464px"><svg width="16" height="16" viewBox="0 0 16 16"><path d="M1 5.5L4 1.5 8 4.5 12 1.5 15 5.5V8H1z" fill="#F04848"/><path d="M2 6L4 3.5 8 6 12 3.5 14 6z" fill="#FFB0B0"/></svg></div>
<div class="tl" style="left:67px;top:466px">Shell</div>
</div>
<div class="sbv"></div>
<div class="sb" style="left:180px;top:64px;width:15px;height:16px;background:linear-gradient(90deg,#CCDCFC 0,#CCDCFC 3px,#BACEFA 4px,#B6CAF8 100%)"><svg class="a" style="left:2px;top:4px" width="9" height="6" shape-rendering="crispEdges"><path d="M4 0h1v1h-1zM3 1h1v1h-1zM4 1h1v1h-1zM5 1h1v1h-1zM2 2h1v1h-1zM3 2h1v1h-1zM4 2h1v1h-1zM5 2h1v1h-1zM6 2h1v1h-1zM1 3h1v1h-1zM2 3h1v1h-1zM3 3h1v1h-1zM5 3h1v1h-1zM6 3h1v1h-1zM7 3h1v1h-1zM0 4h1v1h-1zM1 4h1v1h-1zM2 4h1v1h-1zM6 4h1v1h-1zM7 4h1v1h-1zM8 4h1v1h-1zM0 5h1v1h-1zM1 5h1v1h-1zM7 5h1v1h-1zM8 5h1v1h-1z" fill="#4D6185"/></svg></div><div class="sb" style="left:180px;top:81px;width:15px;height:257px;background:linear-gradient(90deg,#CCDCFC 0,#CCDCFC 3px,#BACEFA 4px,#B6CAF8 100%)"><div class="a" style="left:3px;top:124px;width:7px;height:1px;background:#EEF4FE"></div><div class="a" style="left:4px;top:125px;width:7px;height:1px;background:#8CB0F8"></div><div class="a" style="left:3px;top:126px;width:7px;height:1px;background:#EEF4FE"></div><div class="a" style="left:4px;top:127px;width:7px;height:1px;background:#8CB0F8"></div><div class="a" style="left:3px;top:128px;width:7px;height:1px;background:#EEF4FE"></div><div class="a" style="left:4px;top:129px;width:7px;height:1px;background:#8CB0F8"></div><div class="a" style="left:3px;top:130px;width:7px;height:1px;background:#EEF4FE"></div><div class="a" style="left:4px;top:131px;width:7px;height:1px;background:#8CB0F8"></div></div><div class="sb" style="left:180px;top:453px;width:15px;height:16px;background:linear-gradient(90deg,#CCDCFC 0,#CCDCFC 3px,#BACEFA 4px,#B6CAF8 100%)"><svg class="a" style="left:2px;top:5px" width="9" height="6" shape-rendering="crispEdges"><path d="M0 0h1v1h-1zM1 0h1v1h-1zM7 0h1v1h-1zM8 0h1v1h-1zM0 1h1v1h-1zM1 1h1v1h-1zM2 1h1v1h-1zM6 1h1v1h-1zM7 1h1v1h-1zM8 1h1v1h-1zM1 2h1v1h-1zM2 2h1v1h-1zM3 2h1v1h-1zM5 2h1v1h-1zM6 2h1v1h-1zM7 2h1v1h-1zM2 3h1v1h-1zM3 3h1v1h-1zM4 3h1v1h-1zM5 3h1v1h-1zM6 3h1v1h-1zM3 4h1v1h-1zM4 4h1v1h-1zM5 4h1v1h-1zM4 5h1v1h-1z" fill="#4D6185"/></svg></div>
<!-- tabs -->
<div id="page" class="a"></div>
<div id="tab" class="a"></div>
<div id="tabtop" class="a"></div>
<div class="a" style="left:213px;top:64px"><svg width="16" height="11" viewBox="0 0 16 11"><g shape-rendering="crispEdges"><rect x="0" y="0" width="16" height="11" fill="#E04830"/>
<rect x="0" y="1" width="15" height="1" fill="#FFFFFF"/><rect x="0" y="3" width="15" height="1" fill="#FFFFFF"/><rect x="0" y="5" width="15" height="1" fill="#FFFFFF"/><rect x="0" y="7" width="15" height="1" fill="#FFFFFF"/><rect x="0" y="9" width="15" height="1" fill="#FFFFFF"/>
<rect x="0" y="2" width="15" height="1" fill="#F02828"/><rect x="0" y="4" width="15" height="1" fill="#F02828"/><rect x="0" y="6" width="15" height="1" fill="#F02828"/><rect x="0" y="8" width="15" height="1" fill="#F02828"/>
<rect x="0" y="0" width="9" height="7" fill="#1848D0"/><rect x="0" y="0" width="1" height="7" fill="#5060C8"/><rect x="0" y="0" width="9" height="1" fill="#4058D0"/>
<path d="M2 1h1v1H2zM4 1h1v1H4zM6 1h1v1H6zM3 3h1v1H3zM5 3h1v1H5zM7 3h1v1H7zM2 5h1v1H2zM4 5h1v1H4zM6 5h1v1H6z" fill="#fff"/>
<rect x="0" y="10" width="16" height="1" fill="#D85838"/><rect x="15" y="0" width="1" height="11" fill="#C87048"/></g></svg></div>
<div class="tl" style="left:234px;top:67px">Default</div>
<div class="a" style="left:208px;top:65px;width:67px;height:17px;border:1px dotted #000"></div>
<div id="list" class="a"></div>
<div id="hdr" class="a"></div>
<div class="hsep" style="left:309px"></div>
<div class="hsep" style="left:509px"></div>
<div class="tl" style="left:219px;top:93px">Identification</div>
<div class="tl" style="left:320px;top:93px">Computer - User Name</div>
<div class="tl" style="left:520px;top:93px">Address - Port</div>
<div class="a" style="left:210px;top:125px;width:432px;height:1px;background:#F0E8E0"></div>
<div class="a" style="left:210px;top:142px;width:432px;height:1px;background:#F0E8E0"></div>
<div class="a" style="left:210px;top:159px;width:432px;height:1px;background:#F0E8E0"></div>
<div class="a" style="left:210px;top:176px;width:432px;height:1px;background:#F0E8E0"></div>
<div class="a" style="left:210px;top:193px;width:432px;height:1px;background:#F0E8E0"></div>
<div class="a" style="left:210px;top:210px;width:432px;height:1px;background:#F0E8E0"></div>
<div class="a" style="left:210px;top:227px;width:432px;height:1px;background:#F0E8E0"></div>
<div class="a" style="left:210px;top:244px;width:432px;height:1px;background:#F0E8E0"></div>
<div class="a" style="left:210px;top:261px;width:432px;height:1px;background:#F0E8E0"></div>
<div class="a" style="left:210px;top:278px;width:432px;height:1px;background:#F0E8E0"></div>
<div class="a" style="left:210px;top:295px;width:432px;height:1px;background:#F0E8E0"></div>
<div class="a" style="left:210px;top:312px;width:432px;height:1px;background:#F0E8E0"></div>
<div class="a" style="left:210px;top:329px;width:432px;height:1px;background:#F0E8E0"></div>
<div class="a" style="left:210px;top:346px;width:432px;height:1px;background:#F0E8E0"></div>
<div class="a" style="left:210px;top:363px;width:432px;height:1px;background:#F0E8E0"></div>
<div class="a" style="left:210px;top:380px;width:432px;height:1px;background:#F0E8E0"></div>
<div class="a" style="left:210px;top:397px;width:432px;height:1px;background:#F0E8E0"></div>
<div class="a" style="left:210px;top:414px;width:432px;height:1px;background:#F0E8E0"></div>
<div class="a" style="left:210px;top:431px;width:432px;height:1px;background:#F0E8E0"></div>
<div class="a" style="left:210px;top:448px;width:432px;height:1px;background:#F0E8E0"></div>
<div class="a" style="left:311px;top:109px;width:1px;height:340px;background:#F0E8E0"></div>
<div class="a" style="left:511px;top:109px;width:1px;height:340px;background:#F0E8E0"></div>
<div class="a" style="left:215px;top:109px"><svg width="16" height="11" viewBox="0 0 16 11"><g shape-rendering="crispEdges"><rect x="0" y="0" width="16" height="11" fill="#E04830"/>
<rect x="0" y="1" width="15" height="1" fill="#FFFFFF"/><rect x="0" y="3" width="15" height="1" fill="#FFFFFF"/><rect x="0" y="5" width="15" height="1" fill="#FFFFFF"/><rect x="0" y="7" width="15" height="1" fill="#FFFFFF"/><rect x="0" y="9" width="15" height="1" fill="#FFFFFF"/>
<rect x="0" y="2" width="15" height="1" fill="#F02828"/><rect x="0" y="4" width="15" height="1" fill="#F02828"/><rect x="0" y="6" width="15" height="1" fill="#F02828"/><rect x="0" y="8" width="15" height="1" fill="#F02828"/>
<rect x="0" y="0" width="9" height="7" fill="#1848D0"/><rect x="0" y="0" width="1" height="7" fill="#5060C8"/><rect x="0" y="0" width="9" height="1" fill="#4058D0"/>
<path d="M2 1h1v1H2zM4 1h1v1H4zM6 1h1v1H6zM3 3h1v1H3zM5 3h1v1H5zM7 3h1v1H7zM2 5h1v1H2zM4 5h1v1H4zM6 5h1v1H6z" fill="#fff"/>
<rect x="0" y="10" width="16" height="1" fill="#D85838"/><rect x="15" y="0" width="1" height="11" fill="#C87048"/></g></svg></div>
<div class="tl" style="left:232px;top:112px">Kobayashi</div>
<div class="tl" style="left:317px;top:112px">SECURITY-CRHI2R - Kobayashi</div>
<div class="tl" style="left:517px;top:112px">192.168.1.122 - 192.168.</div>
<div class="a" style="left:210px;top:449px;width:432px;height:17px;background:linear-gradient(#E6ECE6,#ECF0EA 5px,#FCFAF8 6px,#FEFAF8)"></div><div class="sb" style="left:211px;top:449px;width:16px;height:15px;background:linear-gradient(90deg,#CCDCFC 0,#CCDCFC 3px,#BACEFA 4px,#B6CAF8 100%)"><svg class="a" style="left:4px;top:2px" width="6" height="9" shape-rendering="crispEdges"><path d="M4 0h1v1h-1zM5 0h1v1h-1zM3 1h1v1h-1zM4 1h1v1h-1zM5 1h1v1h-1zM2 2h1v1h-1zM3 2h1v1h-1zM4 2h1v1h-1zM1 3h1v1h-1zM2 3h1v1h-1zM3 3h1v1h-1zM0 4h1v1h-1zM1 4h1v1h-1zM2 4h1v1h-1zM1 5h1v1h-1zM2 5h1v1h-1zM3 5h1v1h-1zM2 6h1v1h-1zM3 6h1v1h-1zM4 6h1v1h-1zM3 7h1v1h-1zM4 7h1v1h-1zM5 7h1v1h-1zM4 8h1v1h-1zM5 8h1v1h-1z" fill="#4D6185"/></svg></div><div class="sb" style="left:229px;top:449px;width:251px;height:15px;background:linear-gradient(#CCDCFC 0,#CCDCFC 3px,#BACEFA 4px,#B6CAF8 100%)"><div class="a" style="left:121px;top:3px;width:1px;height:7px;background:#EEF4FE"></div><div class="a" style="left:122px;top:4px;width:1px;height:7px;background:#8CB0F8"></div><div class="a" style="left:123px;top:3px;width:1px;height:7px;background:#EEF4FE"></div><div class="a" style="left:124px;top:4px;width:1px;height:7px;background:#8CB0F8"></div><div class="a" style="left:125px;top:3px;width:1px;height:7px;background:#EEF4FE"></div><div class="a" style="left:126px;top:4px;width:1px;height:7px;background:#8CB0F8"></div><div class="a" style="left:127px;top:3px;width:1px;height:7px;background:#EEF4FE"></div><div class="a" style="left:128px;top:4px;width:1px;height:7px;background:#8CB0F8"></div></div><div class="sb" style="left:626px;top:449px;width:16px;height:15px;background:linear-gradient(90deg,#CCDCFC 0,#CCDCFC 3px,#BACEFA 4px,#B6CAF8 100%)"><svg class="a" style="left:5px;top:2px" width="6" height="9" shape-rendering="crispEdges"><path d="M0 0h1v1h-1zM1 0h1v1h-1zM0 1h1v1h-1zM1 1h1v1h-1zM2 1h1v1h-1zM1 2h1v1h-1zM2 2h1v1h-1zM3 2h1v1h-1zM2 3h1v1h-1zM3 3h1v1h-1zM4 3h1v1h-1zM3 4h1v1h-1zM4 4h1v1h-1zM5 4h1v1h-1zM2 5h1v1h-1zM3 5h1v1h-1zM4 5h1v1h-1zM1 6h1v1h-1zM2 6h1v1h-1zM3 6h1v1h-1zM0 7h1v1h-1zM1 7h1v1h-1zM2 7h1v1h-1zM0 8h1v1h-1zM1 8h1v1h-1z" fill="#4D6185"/></svg></div>
<!-- status -->
<div id="status" class="a"></div>
<div class="a" style="left:504px;top:475px;width:2px;height:11px;background:linear-gradient(90deg,#A8A594 1px,#fff 1px)"></div>
<div class="tl" style="left:510px;top:475px;letter-spacing:-0.3px">1 Users Online</div>
<svg class="a" style="left:634px;top:475px" width="13" height="13" shape-rendering="crispEdges"><path d="M10 2h2v2h-2zM6 6h2v2h-2zM10 6h2v2h-2zM2 10h2v2h-2zM6 10h2v2h-2zM10 10h2v2h-2z" fill="#FFFFFF"/><path d="M9 1h2v2h-2zM5 5h2v2h-2zM9 5h2v2h-2zM1 9h2v2h-2zM5 9h2v2h-2zM9 9h2v2h-2z" fill="#A4A090"/></svg>
</body></html>
